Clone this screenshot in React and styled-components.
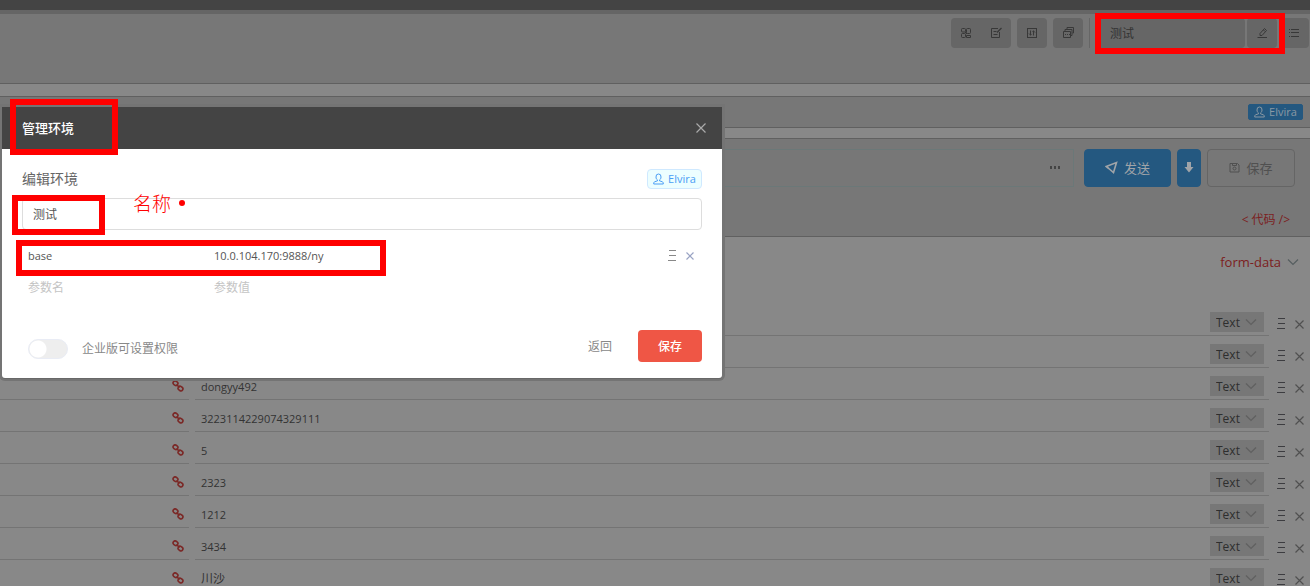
import React from "react";
import styled, { createGlobalStyle } from "styled-components";

const GlobalStyle = createGlobalStyle`
  * { box-sizing: border-box; }
  body { margin: 0; }
  body, button, input, select {
    font-family: "Open Sans", "Noto Sans CJK SC", sans-serif;
    font-size: 12px;
  }
  button, input, select { margin: 0; padding: 0; border: 0; background: none; color: inherit; }
`;

const Page = styled.div`
  position: relative;
  display: flex;
  flex-direction: column;
  height: 100vh;
  overflow: hidden;
  background: #888;
  color: #333;
`;

const TopBar = styled.div`
  flex: none;
  height: 14px;
  background: #444;
  border-bottom: 4px solid #656565;
`;

const Toolbar = styled.header`
  flex: none;
  display: flex;
  align-items: flex-start;
  justify-content: flex-end;
  height: 70px;
  padding: 4px 1px 0 0;
  gap: 6px;
  background: #777;
  border-bottom: 1px solid #606060;
`;

const ToolGroup = styled.div`
  display: flex;
  background: #666;
  border-radius: 4px;
`;

const ToolButton = styled.button`
  display: flex;
  align-items: center;
  justify-content: center;
  width: 30px;
  height: 30px;
  color: #383838;
`;

const Divider = styled.div`
  width: 1px;
  height: 30px;
  background: #666;
`;

const EnvSelect = styled.select`
  appearance: none;
  width: 149px;
  height: 30px;
  padding: 0 14px;
  background: #666;
  border-radius: 4px;
`;

const EnvGroup = styled.div`
  display: flex;
  gap: 2px;
`;

const TagBar = styled.div`
  flex: none;
  display: flex;
  align-items: center;
  justify-content: flex-end;
  height: 32px;
  margin-top: 12px;
  padding: 0 7px 0 0;
  background: #777;
  border: solid #606060;
  border-width: 1px 0;
`;

const UserTag = styled.span`
  display: inline-flex;
  align-items: center;
  justify-content: center;
  gap: 4px;
  width: 55px;
  height: ${(p) => (p.$light ? 20 : 16)}px;
  border-radius: ${(p) => (p.$light ? 4 : 2)}px;
  border: 1px solid ${(p) => (p.$light ? "#cfe9ff" : "#245880")};
  background: ${(p) => (p.$light ? "#ecfeff" : "#245880")};
  color: ${(p) => (p.$light ? "#4a9df5" : "#8a98a4")};
  font-size: 11px;
  line-height: 16px;
`;

const RequestPanel = styled.section`
  flex: none;
  height: 99px;
  margin-top: 10px;
  padding: 10px 15px 0 0;
  background: #777;
  border: solid #606060;
  border-width: 1px 0;
`;

const RequestLine = styled.div`
  display: flex;
  gap: 6px;
  height: 38px;
`;

const UrlBox = styled.div`
  flex: 1;
  display: flex;
  margin-right: 4px;
  border: 1px solid #6b7878;
  border-left: 0;
`;

const UrlInput = styled.input`
  flex: 1;
  min-width: 0;
`;

const MoreButton = styled.button`
  display: flex;
  align-items: center;
  justify-content: center;
  width: 36px;
  color: #444;
`;

const RequestButton = styled.button`
  display: flex;
  align-items: center;
  justify-content: center;
  gap: 6px;
  width: ${(p) => p.$width}px;
  padding-bottom: 2px;
  border-radius: 4px;
  font-size: 13px;
  background: ${(p) => (p.$outline ? "none" : "#245880")};
  border: 1px solid ${(p) => (p.$outline ? "#656565" : "#245880")};
  color: ${(p) => (p.$outline ? "#505050" : "#a0a4a8")};
`;

const CodeRow = styled.div`
  display: flex;
  justify-content: flex-end;
  padding: 23px 5px 0 0;
`;

const CodeLink = styled.a`
  color: #7c2020;
  line-height: 20px;
  text-decoration: none;
`;

const TypeRow = styled.div`
  flex: none;
  display: flex;
  align-items: center;
  justify-content: flex-end;
  gap: 6px;
  height: 67px;
  padding: 0 11px 18px 0;
  color: #565e60;
`;

const TypeButton = styled.button`
  color: #7c2020;
  font-size: 13px;
`;

const ParamRow = styled.div`
  flex: none;
  display: flex;
  height: 32px;
`;

const KeyCell = styled.div`
  display: flex;
  align-items: center;
  justify-content: flex-end;
  width: 189px;
  padding: 4px 5px 0 0;
  border-bottom: 1px solid #747474;
`;

const ValueCell = styled.div`
  flex: 1;
  display: flex;
  align-items: center;
  margin-left: 6px;
  padding: 5px 5px 0 6px;
  border-bottom: 1px solid #747474;
`;

const ValueInput = styled.input`
  flex: 1;
  min-width: 0;
  height: 20px;
  font-size: ${(p) => (p.$cjk ? 12 : 11)}px;
`;

const KindBox = styled.div`
  position: relative;
  color: #606060;
  svg { position: absolute; right: 7px; top: 6px; pointer-events: none; }
`;

const KindSelect = styled.select`
  appearance: none;
  display: block;
  width: 54px;
  height: 20px;
  padding-left: 6px;
  background: #777;
  color: #2e2e2e;
  border-radius: 0;
`;

const RowTools = styled.div`
  display: flex;
  align-items: center;
  gap: 10px;
  width: ${(p) => p.$width || 41}px;
  padding: ${(p) => p.$pad || "8px 0 0 8px"};
`;

const IconButton = styled.button`
  display: flex;
  color: ${(p) => p.$color || "#505050"};
`;

const Dialog = styled.section`
  position: absolute;
  left: 2px;
  top: 107px;
  width: 720px;
  background: #fff;
  border-radius: 0 0 3px 3px;
  box-shadow: 0 1px 0 0 #686868, 0 0 0 3px #747474;
`;

const DialogHeader = styled.header`
  display: flex;
  align-items: center;
  justify-content: space-between;
  height: 42px;
  padding: 0 16px 0 20px;
  background: #444;
  color: #fff;
`;

const DialogTitle = styled.h2`
  margin: 0;
  font-size: 13px;
  font-weight: 500;
  line-height: 20px;
`;

const DialogBody = styled.div`
  padding: 20px 20px 16px;
`;

const BodyHead = styled.div`
  display: flex;
  align-items: center;
  justify-content: space-between;
  height: 20px;
  color: #666;
`;

const BodyTitle = styled.h3`
  margin: 0;
  font-size: 14px;
  font-weight: 400;
  line-height: 20px;
`;

const NameInput = styled.input`
  display: block;
  width: 100%;
  height: 32px;
  margin: 9px 0;
  padding: 0 10px;
  border: 1px solid #ddd;
  border-radius: 4px;
  color: #555;
`;

const VarRow = styled.div`
  display: flex;
  align-items: center;
  height: 32px;
  padding-left: 6px;
`;

const VarInput = styled.input`
  width: ${(p) => p.$width || 186}px;
  height: 20px;
  font-size: ${(p) => (p.$filled ? 11 : 12)}px;
  color: #555;
  &::placeholder { color: #c4c4c4; opacity: 1; }
`;

const Spacer = styled.div`
  flex: 1;
`;

const DialogFooter = styled.footer`
  display: flex;
  align-items: center;
  margin-top: 27px;
  height: 32px;
  color: #888;
`;

const SwitchLabel = styled.label`
  display: flex;
  align-items: center;
  gap: 14px;
  padding: 5px 0 0 6px;
  line-height: 20px;
`;

const Switch = styled.input`
  appearance: none;
  width: 40px;
  height: 20px;
  margin: 0;
  border-radius: 10px;
  background: radial-gradient(circle at 9px 9px, #fff 8px, transparent 9px) #eee;
  border: 1px solid #e9ecf5;
`;

const BackButton = styled.button`
  margin-right: 26px;
`;

const SaveButton = styled.button`
  width: 64px;
  height: 32px;
  border-radius: 4px;
  background: #ef5645;
  color: #fff;
  font-weight: 500;
`;

const Highlight = styled.div`
  position: absolute;
  top: ${(p) => p.$top}px;
  ${(p) => (p.$right ? `right: ${p.$right}px;` : `left: ${p.$left}px;`)}
  width: ${(p) => p.$width}px;
  height: ${(p) => p.$height}px;
  border: 6px solid #f00;
  pointer-events: none;
`;

const Note = styled.div`
  position: absolute;
  left: 133px;
  top: 190px;
  display: flex;
  align-items: center;
  gap: 8px;
  color: #f00;
  font: 300 19px/26px "Noto Sans CJK SC", sans-serif;
  &::after { content: ""; width: 6px; height: 6px; border-radius: 50%; background: #f00; }
`;

const Svg = ({ w = 12, h = 12, children, sw = 1 }) => (
  <svg width={w} height={h} viewBox={`0 0 ${w} ${h}`} fill="none" stroke="currentColor" strokeWidth={sw} aria-hidden="true">
    {children}
  </svg>
);

const GridIcon = () => (
  <Svg><rect x="1.5" y="1.5" width="4" height="3.5" rx="1" /><rect x="6.500" y="1.500" width="4" height="5" rx="1" /><rect x="1.500" y="6.500" width="4" height="4" rx="1" /><path d="M6.500 10.500v-2h4v2zM5 5l2 2" /></Svg>
);
const DocIcon = () => (
  <Svg><path d="M8 1.500H1.500v9h8V5M3.500 4.500h3M3.500 7.500h4" /><path d="M7 5.500L11.500 1" strokeWidth="1.300" /></Svg>
);
const SlidersIcon = () => (
  <Svg><rect x="1.500" y="1.500" width="9" height="9" /><path d="M4.500 3.500v5M3 6.500l1.500 1.500 1-1M7.500 3.500v5M6.500 5l1-1 1.500 1.500" /></Svg>
);
const StackIcon = () => (
  <Svg><path d="M1.500 4.500h7v6h-7zM3 4V2.500h7V8.500H9M5 2V.5h6.500V6H10.500" strokeLinejoin="round" /><path d="M3 7.500h1M5 7.500h1M7 7.500h1" /></Svg>
);
const PencilIcon = () => (
  <Svg><path d="M1.500 10.500h9.500M4 8.500V6.500L8.500 1.500 10.500 3.500 6 8.500zM7.500 3l1.500 1.500" /></Svg>
);
const ListIcon = () => (
  <Svg><path d="M1 2.500h1M1 5.500h1M1 9.500h1M3 2.500h8M3 5.500h8M3 9.500h8" /></Svg>
);
const UserIcon = () => (
  <Svg w={11} h={12}><path d="M5.500 1a2.500 2.800 0 0 0-2.500 3c0 1.500.700 2.500 1.500 3v.8L1.500 8.800Q.7 9.200.7 11h9.600q0-1.800-.8-2.200L6.500 7.800V7C7.300 6.500 8 5.500 8 4a2.500 2.800 0 0 0-2.500-3z" /></Svg>
);
const SendIcon = () => (
  <Svg w={13} h={13} sw={1.600}><path d="M1.200 5.500L11.500 1.500 8.500 11.500 3.800 7.500zM1.200 5.500L3.800 7.500" /></Svg>
);
const DownIcon = () => (
  <Svg w={10} h={12}><path fill="currentColor" stroke="none" d="M3 1h4v5h2.500L5 11.500 .5 6H3z" /></Svg>
);
const SaveIcon = () => (
  <Svg w={11} h={11}><path d="M1 1.500h7.500l1.500 1.500v7H1zM3.500 1.500V3.500h4V1.500" /><circle cx="5.500" cy="6.500" r="1.500" /></Svg>
);
const DotsIcon = () => (
  <Svg w={12} h={4}><path stroke="none" fill="currentColor" d="M1 0h2v3H1zM5 0h2v3H5zM9 0h2v3H9z" /></Svg>
);
const ChevronIcon = () => (
  <Svg w={12} h={8} sw={1.200}><path d="M1 1.500l5 5 5-5" /></Svg>
);
const HandleIcon = () => (
  <Svg w={8} h={12}><path d="M1 .5h7M1 5.500h7M0 10.500h8" /></Svg>
);
const CrossIcon = ({ size = 9 }) => (
  <Svg w={size} h={size} sw={1.200}><path d={`M.5 .5L${size - 0.5} ${size - 0.5}M${size - 0.5} .5L.5 ${size - 0.5}`} /></Svg>
);
const LinkIcon = () => (
  <Svg w={12} h={12} sw={1.600}><g stroke="#7b2826"><rect x="1" y="1.200" width="5" height="4" rx="2" transform="rotate(35 3.500 3.200)" /><rect x="6" y="6.600" width="5" height="4" rx="2" transform="rotate(35 8.500 8.600)" /><path d="M4.500 4.500l3 3" /></g></Svg>
);

const params = ["", "", "dongyy492", "3223114229074329111", "5", "2323", "1212", "3434", "川沙"];

export default function App() {
  return (
    <>
      <GlobalStyle />
      <Page>
        <TopBar />
        <Toolbar>
          <ToolGroup>
            <ToolButton aria-label="模块"><GridIcon /></ToolButton>
            <ToolButton aria-label="文档"><DocIcon /></ToolButton>
          </ToolGroup>
          <ToolGroup><ToolButton aria-label="设置"><SlidersIcon /></ToolButton></ToolGroup>
          <ToolGroup><ToolButton aria-label="窗口"><StackIcon /></ToolButton></ToolGroup>
          <Divider />
          <EnvGroup>
            <EnvSelect aria-label="环境"><option>测试</option></EnvSelect>
            <ToolGroup><ToolButton aria-label="编辑"><PencilIcon /></ToolButton></ToolGroup>
            <ToolGroup><ToolButton aria-label="列表"><ListIcon /></ToolButton></ToolGroup>
          </EnvGroup>
        </Toolbar>
        <TagBar><UserTag><UserIcon />Elvira</UserTag></TagBar>
        <RequestPanel>
          <RequestLine>
            <UrlBox>
              <UrlInput aria-label="URL" />
              <MoreButton aria-label="更多"><DotsIcon /></MoreButton>
            </UrlBox>
            <RequestButton $width={87}><SendIcon />发送</RequestButton>
            <RequestButton $width={24} aria-label="下载"><DownIcon /></RequestButton>
            <RequestButton $width={88} $outline><SaveIcon />保存</RequestButton>
          </RequestLine>
          <CodeRow><CodeLink href="#code">&lt; 代码 /&gt;</CodeLink></CodeRow>
        </RequestPanel>
        <TypeRow><TypeButton>form-data</TypeButton><ChevronIcon /></TypeRow>
        {params.map((value, i) => (
          <ParamRow key={i}>
            <KeyCell><LinkIcon /></KeyCell>
            <ValueCell>
              <ValueInput aria-label={`参数值 ${i + 1}`} defaultValue={value} $cjk={value === "川沙"} />
              <KindBox>
                <KindSelect aria-label={`类型 ${i + 1}`}><option>Text</option></KindSelect>
                <ChevronIcon />
              </KindBox>
            </ValueCell>
            <RowTools>
              <IconButton aria-label="排序" $color="#3c3c40"><HandleIcon /></IconButton>
              <IconButton aria-label="删除"><CrossIcon /></IconButton>
            </RowTools>
          </ParamRow>
        ))}

        <Dialog role="dialog" aria-labelledby="env-title">
          <DialogHeader>
            <DialogTitle id="env-title">管理环境</DialogTitle>
            <IconButton aria-label="关闭" $color="#aaa"><CrossIcon size={10} /></IconButton>
          </DialogHeader>
          <DialogBody>
            <BodyHead>
              <BodyTitle>编辑环境</BodyTitle>
              <UserTag $light><UserIcon />Elvira</UserTag>
            </BodyHead>
            <NameInput aria-label="名称" defaultValue="测试" />
            <VarRow>
              <VarInput aria-label="参数名" defaultValue="base" $filled />
              <VarInput aria-label="参数值" defaultValue="10.0.104.170:9888/ny" $filled $width={300} />
              <Spacer />
              <RowTools $width={34} $pad="2px 0 0 0">
                <IconButton aria-label="排序" $color="#888"><HandleIcon /></IconButton>
                <IconButton aria-label="删除" $color="#9aa4c4"><CrossIcon size={8} /></IconButton>
              </RowTools>
            </VarRow>
            <VarRow>
              <VarInput aria-label="新参数名" placeholder="参数名" />
              <VarInput aria-label="新参数值" placeholder="参数值" $width={300} />
            </VarRow>
            <DialogFooter>
              <SwitchLabel><Switch type="checkbox" />企业版可设置权限</SwitchLabel>
              <Spacer />
              <BackButton>返回</BackButton>
              <SaveButton>保存</SaveButton>
            </DialogFooter>
          </DialogBody>
        </Dialog>

        <Highlight $right={25} $top={13} $width={190} $height={41} />
        <Highlight $left={10} $top={99} $width={108} $height={56} />
        <Highlight $left={12} $top={195} $width={93} $height={40} />
        <Highlight $left={16} $top={240} $width={370} $height={36} />
        <Note>名称</Note>
      </Page>
    </>
  );
}
